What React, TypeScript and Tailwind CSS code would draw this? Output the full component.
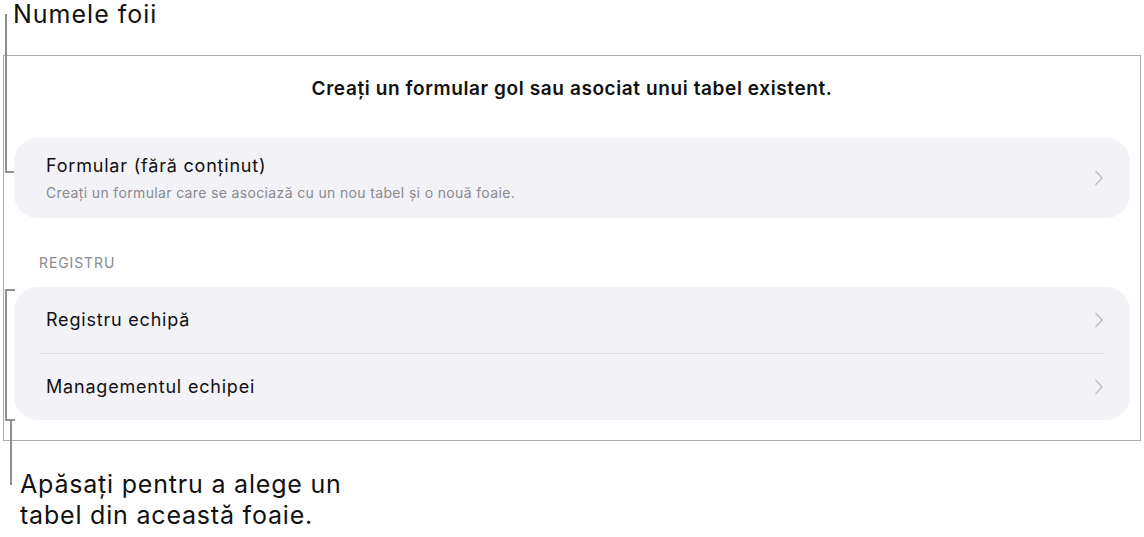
import React from "react";

const font = { fontFamily: 'Inter, "Noto Sans", "Liberation Sans", sans-serif' };

function Chevron() {
  return (
    <svg width="10" height="16" viewBox="0 0 10 16" fill="none" className="shrink-0">
      <path d="M2 1.5 L8 8 L2 14.5" stroke="#c4c4c7" strokeWidth="1.8" strokeLinecap="round" strokeLinejoin="round" />
    </svg>
  );
}

function Row({ title }: { title: string }) {
  return (
    <div className="flex h-[66px] items-center justify-between pl-[32px] pr-[26px]">
      <span className="text-[18px] leading-[22px] tracking-[0.8px] text-[#111]">{title}</span>
      <Chevron />
    </div>
  );
}

export default function App() {
  return (
    <div className="relative h-[537px] w-[1144px] overflow-hidden bg-white text-black" style={font}>
      {/* sheet name caption */}
      <div className="h-[55px] pl-[13px] text-[25px] leading-[28px] tracking-[1px] text-[#111]">Numele foii</div>

      {/* form sheet panel */}
      <div className="mx-[3px] h-[386px] border border-[#aaaaaa] px-[10px]">
        <div className="pt-[21px] text-center text-[19px] font-semibold leading-[24px] tracking-[0.6px] text-[#111]">
          Creați un formular gol sau asociat unui tabel existent.
        </div>

        <div className="mt-[37px] flex h-[80px] items-center justify-between rounded-[24px] bg-[#f2f2f7] pl-[32px] pr-[26px]">
          <div className="flex flex-col gap-[7px]">
            <span className="text-[18px] leading-[22px] tracking-[0.8px] text-[#111]">Formular (fără conținut)</span>
            <span className="text-[14px] leading-[18px] tracking-[0.35px] text-[#8a8a8e]">
              Creați un formular care se asociază cu un nou tabel și o nouă foaie.
            </span>
          </div>
          <Chevron />
        </div>

        <div className="mt-[36px] pl-[25px] text-[14px] leading-[18px] tracking-[0.9px] text-[#8a8a8e]">REGISTRU</div>

        <div className="mt-[15px] rounded-[24px] bg-[#f2f2f7]">
          <Row title="Registru echipă" />
          <div className="mx-[25px] h-px bg-[#dedee2]" />
          <Row title="Managementul echipei" />
        </div>
      </div>

      {/* callout text */}
      <div className="pl-[20px] pt-[28px] text-[25px] leading-[31px] tracking-[0.8px] text-[#111]">
        Apăsați pentru a alege un
        <br />
        tabel din această foaie.
      </div>

      {/* callout lines */}
      <div className="absolute left-[5px] top-[14px] h-[159px] w-[9px] border-b-2 border-l-2 border-[#8e8e8e]" />
      <div className="absolute left-[5px] top-[289px] h-[132px] w-[10px] border-y-2 border-l-2 border-[#8e8e8e]" />
      <div className="absolute left-[10px] top-[421px] h-[64px] w-0 border-l-2 border-[#8e8e8e]" />
    </div>
  );
}
